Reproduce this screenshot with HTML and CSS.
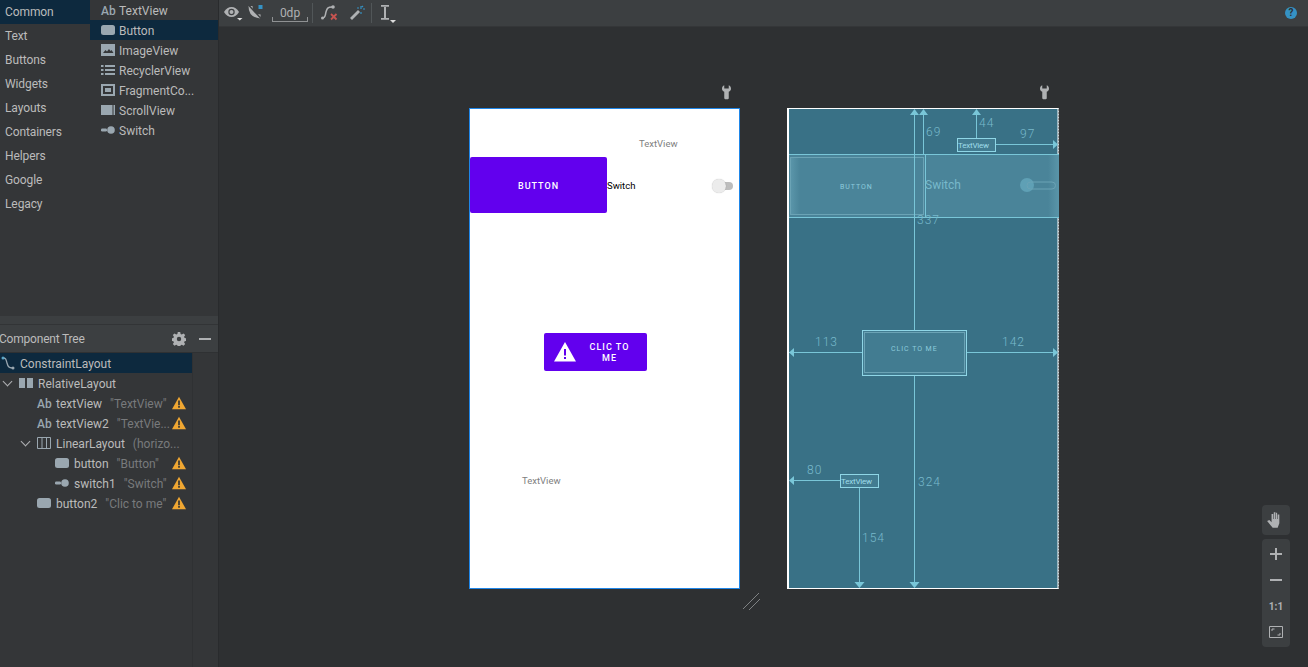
FILE: index.html
```html
<!DOCTYPE html>
<html>
  <head>
    <title>Layout Editor</title>
    <link rel="stylesheet" href="styles.css">
  </head>
  <body>
    <svg class="defs" width="0" height="0">
      <symbol id="i-button" viewBox="0 0 14 14"><rect x="0" y="2" width="14" height="10" rx="2.5" fill="#9aa7b0"/></symbol>
      <symbol id="i-image" viewBox="0 0 14 14"><rect x="0" y="1" width="14" height="12" fill="#9aa7b0"/><path d="M2 10l2.500-3 1.500 1.500 2-2.500 1.500 2 1-1 2 3z" fill="#343638"/></symbol>
      <symbol id="i-list" viewBox="0 0 14 14"><path d="M0 2h2.500v2h-2.500zM4 2h10v2h-10zM0 6h2.500v2h-2.500zM4 6h10v2h-10zM0 10h2.500v2h-2.500zM4 10h10v2h-10z" fill="#9aa7b0"/></symbol>
      <symbol id="i-fragment" viewBox="0 0 14 14"><path fill-rule="evenodd" d="M0 1h14v12h-14zM2 3v8h10v-8zM4 5h6v4h-6z" fill="#9aa7b0"/></symbol>
      <symbol id="i-scroll" viewBox="0 0 14 14"><path d="M0 2h11.500v10h-11.500zM12.500 2h1.500v10h-1.500z" fill="#9aa7b0"/></symbol>
      <symbol id="i-switch" viewBox="0 0 14 14"><circle cx="10" cy="7" r="3.800" fill="#9aa7b0"/><rect x="0" y="5.500" width="6" height="3" rx="1.200" fill="#9aa7b0"/></symbol>
      <symbol id="i-warn" viewBox="0 0 14 14"><path d="M7 .8l7 12.400h-14z" fill="#f0a732"/><path d="M6.200 4.500h1.600v4.800h-1.600zM6.200 10h1.600v1.700h-1.600z" fill="#2f3133"/></symbol>
      <symbol id="i-wrench" viewBox="0 0 10 16"><path d="M2.500 0v3.500h5v-3.500c1.500.6 2.500 2 2.500 3.700 0 1.500-.9 2.800-2.500 3.500v7.300c0 .6-.6 1-1 1h-3c-.4 0-1-.4-1-1v-7.300c-1.600-.7-2.500-2-2.500-3.500 0-1.700 1-3.100 2.500-3.700z" fill="#afb1b3"/></symbol>
    </svg>

    <aside class="side">
      <section class="palette">
        <ul class="cats">
          <li class="cat cat-on">Common</li>
          <li class="cat">Text</li>
          <li class="cat">Buttons</li>
          <li class="cat">Widgets</li>
          <li class="cat">Layouts</li>
          <li class="cat">Containers</li>
          <li class="cat">Helpers</li>
          <li class="cat">Google</li>
          <li class="cat">Legacy</li>
        </ul>
        <ul class="items">
          <li class="item"><span class="ab">Ab</span>TextView</li>
          <li class="item item-on"><svg class="ic"><use href="#i-button"/></svg>Button</li>
          <li class="item"><svg class="ic"><use href="#i-image"/></svg>ImageView</li>
          <li class="item"><svg class="ic"><use href="#i-list"/></svg>RecyclerView</li>
          <li class="item"><svg class="ic"><use href="#i-fragment"/></svg>FragmentCo...</li>
          <li class="item"><svg class="ic"><use href="#i-scroll"/></svg>ScrollView</li>
          <li class="item"><svg class="ic"><use href="#i-switch"/></svg>Switch</li>
        </ul>
      </section>

      <section class="tree">
        <header class="tree-head">
          <span class="tree-title">Component Tree</span>
          <svg class="gear" width="14" height="14" viewBox="0 0 14 14"><path fill-rule="evenodd" d="M5.800 0h2.400l.4 2 1.200.5 1.700-1.100 1.700 1.700-1.100 1.700.5 1.200 2 .4v2.400l-2 .4-.5 1.200 1.100 1.700-1.700 1.700-1.700-1.100-1.200.5-.4 2h-2.400l-.4-2-1.200-.5-1.700 1.100-1.700-1.700 1.100-1.700-.5-1.200-2-.4v-2.400l2-.4.5-1.200-1.100-1.700 1.700-1.700 1.700 1.100 1.200-.5zM7 4.800a2.200 2.200 0 1 0 0 4.400 2.200 2.200 0 0 0 0-4.400z" fill="#afb1b3"/></svg>
          <span class="dash"></span>
        </header>
        <ul class="rows">
          <li class="row row-on">
            <svg class="ic root" viewBox="0 0 14 14"><path d="M2 2c3 0 3 1.500 4 5s1.500 5 5.500 5" fill="none" stroke="#9aa7b0" stroke-width="1.300"/><circle cx="2" cy="2" r="1.500" fill="#5aa6c8"/><circle cx="12" cy="12" r="1.500" fill="#9aa7b0"/></svg>
            <span class="name">ConstraintLayout</span>
          </li>
          <li class="row lvl1">
            <span class="chev"></span>
            <svg class="ic" viewBox="0 0 14 14"><path d="M0 2h6v10h-6zM8 2h6v10h-6z" fill="#9aa7b0"/></svg>
            <span class="name">RelativeLayout</span>
          </li>
          <li class="row lvl2">
            <span class="ab ab-tree">Ab</span>
            <span class="name">textView</span><span class="hint">"TextView"</span>
            <svg class="warn"><use href="#i-warn"/></svg>
          </li>
          <li class="row lvl2">
            <span class="ab ab-tree">Ab</span>
            <span class="name">textView2</span><span class="hint">"TextVie...</span>
            <svg class="warn"><use href="#i-warn"/></svg>
          </li>
          <li class="row lvl1b">
            <span class="chev"></span>
            <svg class="ic" viewBox="0 0 14 14"><path d="M.5 1.500h13v11h-13zM5 1.500v11M9.500 1.500v11" fill="none" stroke="#9aa7b0"/></svg>
            <span class="name">LinearLayout</span><span class="hint">(horizo...</span>
          </li>
          <li class="row lvl3">
            <svg class="ic"><use href="#i-button"/></svg>
            <span class="name">button</span><span class="hint">"Button"</span>
            <svg class="warn"><use href="#i-warn"/></svg>
          </li>
          <li class="row lvl3">
            <svg class="ic"><use href="#i-switch"/></svg>
            <span class="name">switch1</span><span class="hint">"Switch"</span>
            <svg class="warn"><use href="#i-warn"/></svg>
          </li>
          <li class="row lvl2">
            <svg class="ic"><use href="#i-button"/></svg>
            <span class="name">button2</span><span class="hint">"Clic to me"</span>
            <svg class="warn"><use href="#i-warn"/></svg>
          </li>
        </ul>
      </section>
    </aside>

    <main class="main">
      <div class="toolbar">
        <svg class="tool tool-eye" width="19" height="16" viewBox="0 0 19 16"><path d="M0 7c2-3.500 4.500-5 7.500-5s5.500 1.500 7.500 5c-2 3.500-4.500 5-7.500 5s-5.500-1.500-7.500-5z" fill="#afb1b3"/><circle cx="7.500" cy="7" r="3.200" fill="#3c3f41"/><circle cx="7.500" cy="7" r="2" fill="#afb1b3"/><path d="M13 13h5.500l-2.750 2.500z" fill="#ddd"/></svg>
        <svg class="tool tool-mag" width="16" height="16" viewBox="0 0 16 16"><path d="M2.500 1c0 6 3 10 10 10.500" fill="none" stroke="#afb1b3" stroke-width="4"/><path d="M1 .5l13 14" stroke="#3c3f41" stroke-width="1.500"/><rect x="10.500" y="0" width="4" height="4" fill="#3592c4"/></svg>
        <span class="margin">0dp</span>
        <span class="sep sep-a"></span>
        <svg class="tool tool-path" width="18" height="18" viewBox="0 0 18 18"><path d="M1 14c4 0 3-3 4-6s1-5 6-5" fill="none" stroke="#afb1b3" stroke-width="1.500"/><circle cx="12" cy="3" r="1.800" fill="#afb1b3"/><circle cx="1.500" cy="14" r="1.500" fill="#afb1b3"/><path d="M10 10l5.500 5.500M15.500 10l-5.500 5.500" stroke="#c75450" stroke-width="1.800"/></svg>
        <svg class="tool tool-wand" width="16" height="16" viewBox="0 0 16 16"><path d="M1 13l8-8 2 2-8 8z" fill="#afb1b3"/><path d="M12 1v3M12 7v2M8 3h2M14 4h2M14 1l-1 1" stroke="#3592c4" stroke-width="1.200"/></svg>
        <span class="sep sep-b"></span>
        <svg class="tool tool-base" width="16" height="20" viewBox="0 0 16 20"><path d="M1 2h8v1.800h-8zM1 15h8v1.800h-8zM4 4h2v11h-2z" fill="#afb1b3"/><path d="M10 17h6l-3 3z" fill="#ddd"/></svg>
        <span class="help">?</span>
      </div>

      <div class="canvas">
        <svg class="wrench wrench-a"><use href="#i-wrench"/></svg>
        <svg class="wrench wrench-b"><use href="#i-wrench"/></svg>

        <div class="device">
          <span class="tv tv-a">TextView</span>
          <div class="btn btn-main">BUTTON</div>
          <span class="sw-label">Switch</span>
          <div class="sw"><span class="sw-knob"></span></div>
          <div class="btn btn-clic">
            <svg class="btn-icon" width="22" height="20" viewBox="0 0 22 20"><path d="M11 0l11 19.500h-22z" fill="#fff"/><path d="M10 7h2v6.500h-2zM10 15h2v2h-2z" fill="#6200ee"/></svg>
            <span class="btn-text">CLIC TO<br>ME</span>
          </div>
          <span class="tv tv-b">TextView</span>
        </div>

        <svg class="blueprint" width="274" height="484" viewBox="786 107 274 484">
          <defs>
            <linearGradient id="fade-l"><stop offset="0" stop-color="#5a95a9"/><stop offset="1" stop-color="#5a95a9" stop-opacity="0"/></linearGradient>
            <linearGradient id="fade-r"><stop offset="0" stop-color="#5a95a9" stop-opacity="0"/><stop offset="1" stop-color="#5a95a9"/></linearGradient>
          </defs>
          <rect class="bp-bg" x="788" y="108.500" width="270" height="480"/>
          <path class="bp-edge" d="M788 108v481"/>
          <path class="bp-dots" d="M1058.500 108v481"/>
          <rect class="bp-band" x="789" y="154.500" width="270" height="63"/>
          <rect class="bp-inner" x="790.500" y="157.500" width="133" height="57"/>
          <rect fill="url(#fade-l)" x="791" y="158" width="9" height="56"/>
          <rect fill="url(#fade-r)" x="1048" y="155" width="11" height="62"/>
          <path class="bp-line" d="M789 154.500h270M789 217.500h270M925.500 155v62"/>
          <path class="bp-line" d="M914.500 115v215M923.500 115v39M976.500 115v23M996 144.500h58M789 352.500h73M967 352.500h88M914.500 375v208M794 480.500h46M859.500 487v96"/>
          <path class="bp-arrow" d="M914.500 109l4.500 6h-9zM923.500 109l4.500 6h-9zM976.500 109l4.500 6h-9zM1058 144.500l-5-4.500v9zM789 352.500l5-4.500v9zM1058 352.500l-5-4.500v9zM789 480.500l5-4.500v9zM914.500 588l-5-6h10zM859.500 588l-5-6h10z"/>
          <rect class="bp-box" x="957.500" y="138.500" width="38" height="13"/>
          <rect class="bp-box" x="862.500" y="330.500" width="104" height="45"/>
          <rect class="bp-inner" x="864.500" y="332.500" width="100" height="40"/>
          <rect class="bp-box" x="840.500" y="474.500" width="38" height="13"/>
          <rect class="bp-knob" x="1020" y="178" width="14" height="14" rx="7"/>
          <rect class="bp-track" x="1027" y="182" width="28.500" height="7" rx="3.500"/>
          <text class="bp-num" x="926" y="136">69</text>
          <text class="bp-num" x="979" y="127">44</text>
          <text class="bp-num" x="1020" y="138">97</text>
          <text class="bp-num" x="917" y="224">337</text>
          <text class="bp-num" x="815" y="346">113</text>
          <text class="bp-num" x="1002" y="346">142</text>
          <text class="bp-num" x="807" y="474">80</text>
          <text class="bp-num" x="918" y="486">324</text>
          <text class="bp-num" x="862" y="542">154</text>
          <text class="bp-tv" x="958" y="148">TextView</text>
          <text class="bp-tv" x="841" y="484">TextView</text>
          <text class="bp-small" x="840" y="189">BUTTON</text>
          <text class="bp-small" x="891" y="351">CLIC TO ME</text>
          <text class="bp-sw" x="925" y="189">Switch</text>
        </svg>

        <svg class="handle" width="20" height="20" viewBox="0 0 20 20"><path d="M1 17L17 1M7 18L18 7" stroke="#7f8284" fill="none"/></svg>

        <div class="zoom">
          <div class="zoom-box zoom-hand">
            <svg width="20" height="20" viewBox="0 0 18 18"><path d="M1 10l2-1 2 2V3.500h1.500V8h.5V2h1.500v6h.5V2.500H10V8h.5V4H12v8l-1.500 4H6L1 10z" fill="#afb1b3"/></svg>
          </div>
          <div class="zoom-box zoom-tools">
            <span class="plus"></span>
            <span class="minus"></span>
            <span class="one">1:1</span>
            <svg width="14" height="12" viewBox="0 0 14 12"><path d="M.5.500h13v11h-13z" fill="none" stroke="#afb1b3"/><path d="M3 5V3h2.500M11 7v2H8.500" fill="none" stroke="#afb1b3"/></svg>
          </div>
        </div>
      </div>
    </main>
  </body>
</html>
```

FILE: styles.css
```css
* {
  box-sizing: border-box;
}

html,
body {
  height: 100%;
}

body {
  margin: 0;
  display: flex;
  overflow: hidden;
  background-color: #2e3032;
  color: #bbbbbb;
  font-family: Roboto, "Open Sans", sans-serif;
  font-size: 12px;
}

ul {
  list-style: none;
  margin: 0;
  padding: 0;
}

.defs {
  position: absolute;
}

/* left column */
.side {
  width: 219px;
  flex: none;
  display: flex;
  flex-direction: column;
  border-right: 1px solid #292b2d;
  background-color: #343638;
}

.palette {
  height: 324px;
  flex: none;
  display: flex;
  border-bottom: 8px solid #3c3f41;
}

.cats {
  width: 90px;
  flex: none;
}

.cat {
  height: 24px;
  line-height: 24px;
  padding-left: 5px;
  letter-spacing: -0.1px;
}

.cat-on {
  background-color: #0d293e;
}

.items {
  flex: 1;
}

.item {
  height: 20px;
  display: flex;
  align-items: center;
  padding-top: 2px;
  padding-left: 11px;
}

.item-on {
  background-color: #0d293e;
}

.ic {
  width: 14px;
  height: 14px;
  flex: none;
  margin-top: -2px;
  margin-right: 4px;
}

.ab {
  width: 18px;
  flex: none;
  color: #9aa7b0;
  font-weight: 500;
  font-size: 12px;
}

/* component tree */
.tree {
  flex: 1;
  background-color: #343638;
}

.tree-head {
  height: 29px;
  display: flex;
  align-items: center;
  background-color: #3c3f41;
  border-top: 1px solid #323436;
  border-bottom: 1px solid #2f3133;
}

.tree-title {
  flex: 1;
  margin-left: -1px;
  letter-spacing: -0.2px;
}

.gear {
  margin-right: 13px;
}

.dash {
  width: 12px;
  height: 2px;
  margin-right: 7px;
  background-color: #afb1b3;
}

.rows {
  width: 193px;
  height: 314px;
  border-right: 1px solid #2f3133;
}

.row {
  height: 20px;
  display: flex;
  align-items: center;
  padding-top: 2px;
}

.row-on {
  background-color: #0d293e;
  padding-left: 1px;
}

.row-on .ic {
  margin-right: 5px;
}

.lvl1 {
  padding-left: 19px;
}

.lvl1b {
  padding-left: 37px;
}

.lvl2 {
  padding-left: 37px;
}

.lvl3 {
  padding-left: 55px;
}

.lvl1 .ic,
.lvl1b .ic,
.lvl2 .ic,
.lvl3 .ic {
  margin-right: 5px;
}

.chev {
  width: 7px;
  height: 7px;
  margin-left: -15px;
  margin-right: 8px;
  margin-top: -6px;
  border-right: 1.5px solid #afb1b3;
  border-bottom: 1.500px solid #afb1b3;
  transform: rotate(45deg);
}

.ab-tree {
  width: 19px;
}

.hint {
  margin-left: 8px;
  color: #787a7c;
  white-space: nowrap;
}

.warn {
  width: 14px;
  height: 14px;
  margin-top: -2px;
  margin-left: auto;
  margin-right: 6px;
  flex: none;
}

/* toolbar and canvas */
.main {
  flex: 1;
  display: flex;
  flex-direction: column;
}

.toolbar {
  height: 27px;
  flex: none;
  display: flex;
  align-items: center;
  padding-left: 5px;
  background-color: #3c3f41;
  border-bottom: 1px solid #343638;
}

.tool-mag {
  margin-left: 5px;
}

.margin {
  width: 36px;
  height: 15px;
  margin-left: 8px;
  margin-top: 2px;
  line-height: 12px;
  text-align: center;
  border: 1px solid #8f9193;
  border-width: 0 1px 1px;
  border-image: linear-gradient(transparent 70%, #8f9193 70%) 1;
  color: #afb1b3;
}

.sep {
  width: 1px;
  height: 20px;
  background-color: #515658;
}

.sep-a {
  margin-left: 4px;
}

.tool-path {
  margin-left: 8px;
}

.tool-wand {
  margin-left: 10px;
}

.sep-b {
  margin-left: 6px;
}

.tool-base {
  margin-left: 8px;
}

.help {
  width: 12px;
  height: 12px;
  margin-left: auto;
  margin-right: 11px;
  border-radius: 50%;
  background-color: #3592c4;
  color: #2e3032;
  font-size: 10px;
  font-weight: 700;
  line-height: 12px;
  text-align: center;
}

.canvas {
  flex: 1;
  position: relative;
}

.wrench {
  position: absolute;
  top: 58px;
  width: 9px;
  height: 15px;
}

.wrench-a {
  left: 503px;
}

.wrench-b {
  left: 821px;
}

/* device preview, children sit where the layout editor placed them */
.device {
  position: absolute;
  left: 250px;
  top: 81px;
  width: 271px;
  height: 481px;
  background-color: #fff;
  border: 1px solid #1f86e8;
  font-family: Roboto, sans-serif;
}

.tv {
  position: absolute;
  color: #808080;
  font-size: 9.500px;
  line-height: 12px;
}

.tv-a {
  left: 169px;
  top: 29px;
}

.tv-b {
  left: 52px;
  top: 366px;
}

.btn {
  position: absolute;
  background-color: #6200ee;
  border-radius: 2px;
  color: #fff;
  font-size: 9px;
  font-weight: 500;
  letter-spacing: 1px;
}

.btn-main {
  left: 0;
  top: 48px;
  width: 137px;
  height: 56px;
  line-height: 58px;
  text-align: center;
}

.sw-label {
  position: absolute;
  left: 137px;
  top: 71px;
  color: #000;
  font-size: 9.500px;
  line-height: 12px;
}

.sw {
  position: absolute;
  left: 247px;
  top: 73px;
  width: 16px;
  height: 8px;
  border-radius: 4px;
  background-color: #bdbdbd;
}

.sw-knob {
  position: absolute;
  left: -5px;
  top: -3px;
  width: 14px;
  height: 14px;
  border-radius: 50%;
  background-color: #ececec;
  box-shadow: 0 0 1px rgba(0, 0, 0, 0.3);
}

.btn-clic {
  left: 74px;
  top: 224px;
  width: 103px;
  height: 38px;
  display: flex;
  align-items: center;
}

.btn-icon {
  margin-left: 10px;
  flex: none;
}

.btn-text {
  flex: 1;
  padding-top: 2px;
  padding-right: 4px;
  text-align: center;
  line-height: 11px;
}

/* blueprint */
.blueprint {
  position: absolute;
  left: 567px;
  top: 80px;
}

.bp-bg {
  fill: #397186;
  stroke: #fff;
}

.bp-edge {
  stroke: #fff;
  stroke-width: 2;
}

.bp-dots {
  stroke: #c8d8dd;
  stroke-dasharray: 1 2;
}

.bp-band {
  fill: #4a8499;
}

.bp-inner {
  fill: none;
  stroke: #6ba3b5;
}

.bp-line {
  stroke: #79c6d8;
  fill: none;
}

.bp-arrow {
  fill: #79c6d8;
}

.bp-box {
  fill: #4a8499;
  fill-opacity: 0.6;
  stroke: #8fd6e6;
}

.bp-knob {
  fill: #5fa0b5;
}

.bp-track {
  fill: none;
  stroke: #6ba3b5;
}

.bp-num {
  fill: #78b9cb;
  font-family: Roboto, sans-serif;
  font-size: 12px;
  font-weight: 300;
  letter-spacing: 1px;
}

.bp-tv {
  fill: #9fdcea;
  font-family: Roboto, sans-serif;
  font-size: 8px;
  letter-spacing: -0.2px;
}

.bp-small {
  fill: #8ccbdc;
  font-family: Roboto, sans-serif;
  font-size: 7px;
  letter-spacing: 0.95px;
}

.bp-sw {
  fill: #78b9cb;
  font-family: Roboto, sans-serif;
  font-size: 12px;
}

.handle {
  position: absolute;
  left: 523px;
  top: 565px;
}

/* zoom controls */
.zoom {
  position: absolute;
  right: 18px;
  bottom: 20px;
  width: 28px;
  display: flex;
  flex-direction: column;
  gap: 4px;
}

.zoom-box {
  border-radius: 4px;
  background-color: #3c3f41;
}

.zoom-hand {
  height: 30px;
  display: flex;
  align-items: center;
  justify-content: center;
}

.zoom-tools {
  height: 108px;
  display: grid;
  grid-auto-rows: 26px;
  align-items: center;
  justify-items: center;
  padding-top: 2px;
}

.plus {
  width: 12px;
  height: 12px;
  background: linear-gradient(#afb1b3, #afb1b3) center / 12px 2px no-repeat,
    linear-gradient(#afb1b3, #afb1b3) center / 2px 12px no-repeat;
}

.minus {
  width: 12px;
  height: 2px;
  background-color: #afb1b3;
}

.one {
  color: #afb1b3;
  font-size: 10px;
  font-weight: 700;
}
```
